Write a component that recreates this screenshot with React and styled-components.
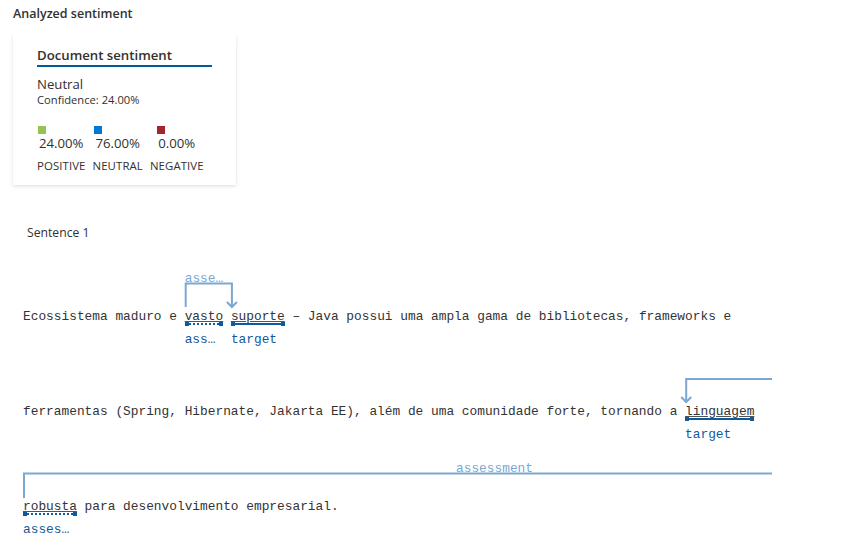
import React from 'react'
import styled, { createGlobalStyle, css } from 'styled-components'

const CW = 7.7 // monospace advance, px
const LIGHT = '#7ba7d1'
const DARK = '#0f5a9e'

const GlobalStyle = createGlobalStyle`
  * { box-sizing: border-box; }
  body {
    margin: 0;
    background: #fff;
    color: #323130;
    font-family: "Open Sans", "Noto Sans", sans-serif;
  }
`

// Page
const Page = styled.main`
  padding: 5px 13px 0;
`
const Heading = styled.h2`
  margin: 0;
  font-size: 12.5px;
  line-height: 18px;
  font-weight: 600;
`

// Document card
const Card = styled.section`
  width: 223px;
  margin-top: 11px;
  padding: 11px 24px 12px;
  background: #fff;
  box-shadow: 0 1.6px 3.6px rgba(0, 0, 0, 0.13), 0 0.3px 0.9px rgba(0, 0, 0, 0.11);
`
const CardTitle = styled.h3`
  margin: 0;
  font-size: 13.2px;
  line-height: 20px;
  font-weight: 600;
  border-bottom: 2px solid #005a9e;
`
const Overall = styled.div`
  margin-top: 8px;
  font-size: 13.2px;
  line-height: 18px;
`
const Confidence = styled.div`
  font-size: 11.2px;
  line-height: 14px;
`
const Scores = styled.div`
  display: flex;
  gap: 7px;
  margin-top: 19px;
`
const Score = styled.div`
  display: flex;
  flex-direction: column;
  align-items: center;
`
const ScoreValue = styled.div`
  display: flex;
  flex-direction: column;
  align-items: flex-start;
`
const Swatch = styled.span`
  width: 8px;
  height: 8px;
  margin-left: -1px;
  background: ${(p) => p.$color};
`
const Percent = styled.span`
  font-size: 13.2px;
  line-height: 18px;
`
const ScoreLabel = styled.span`
  margin-top: 7px;
  font-size: 11.4px;
  line-height: 14px;
  letter-spacing: 0.1px;
`

// Sentence visualisation
const SentenceTitle = styled.div`
  margin-top: 39px;
  padding-left: 14px;
  font-size: 12.2px;
  line-height: 18px;
`
const Viz = styled.div`
  margin-top: 27px;
  padding-left: 10px;
`
const Line = styled.div`
  position: relative;
  height: 95px;
  width: 749px;
  padding-top: 40px;
  font-family: "Liberation Mono", monospace;
  font-size: 12.833px;
  line-height: 16px;
  color: #333;
  white-space: pre;
`
const Arcs = styled.svg`
  position: absolute;
  top: 0;
  left: 0;
  overflow: visible;
  pointer-events: none;
`
const ArcLabel = styled.span`
  position: absolute;
  top: 2px;
  color: ${LIGHT};
  line-height: 16px;
`
const Token = styled.span`
  position: relative;
  text-decoration: underline;
  text-decoration-color: #555;
`
const capStyle = css`
  content: '';
  position: absolute;
  top: -1px;
  width: 4px;
  height: 4px;
  background: ${DARK};
`
const Bar = styled.span`
  position: absolute;
  left: 0;
  right: 0;
  top: calc(100% - 1px);
  height: 2px;
  background: ${(p) =>
    p.$dotted
      ? `repeating-linear-gradient(to right, ${DARK} 0 2px, transparent 2px 4px)`
      : DARK};
  &::before { ${capStyle} left: 0; }
  &::after { ${capStyle} right: 0; }
`
const TokenLabel = styled.span`
  position: absolute;
  left: 0;
  top: 23px;
  color: ${DARK};
  text-decoration: none;
  display: inline-block;
`

const Arrow = ({ x, y }) => <polyline points={`${x - 5},${y - 5} ${x},${y} ${x + 5},${y - 5}`} />

const AnnotatedToken = ({ text, label, dotted }) => (
  <Token>
    {text}
    <Bar $dotted={dotted} />
    <TokenLabel>{label}</TokenLabel>
  </Token>
)

const scores = [
  { color: '#92c353', value: '24.00%', label: 'POSITIVE' },
  { color: '#0078d4', value: '76.00%', label: 'NEUTRAL' },
  { color: '#a4262c', value: '0.00%', label: 'NEGATIVE' },
]

const x = (i) => i * CW

export default function App() {
  return (
    <Page>
      <GlobalStyle />
      <Heading>Analyzed sentiment</Heading>
      <Card>
        <CardTitle>Document sentiment</CardTitle>
        <Overall>Neutral</Overall>
        <Confidence>Confidence: 24.00%</Confidence>
        <Scores>
          {scores.map((s) => (
            <Score key={s.label}>
              <ScoreValue>
                <Swatch $color={s.color} />
                <Percent>{s.value}</Percent>
              </ScoreValue>
              <ScoreLabel>{s.label}</ScoreLabel>
            </Score>
          ))}
        </Scores>
      </Card>

      <SentenceTitle>Sentence 1</SentenceTitle>
      <Viz>
        <Line>
          <Arcs width="749" height="40" fill="none" stroke={LIGHT} strokeWidth="2">
            <path d={`M${x(21) + 1} 38 V14.5 H${x(27) + 1} V38`} />
            <Arrow x={x(27) + 1} y={38} />
          </Arcs>
          <ArcLabel style={{ left: x(21) }}>asse…</ArcLabel>
          {'Ecossistema maduro e '}
          <AnnotatedToken text="vasto" label="ass…" dotted />
          {' '}
          <AnnotatedToken text="suporte" label="target" />
          {' – Java possui uma ampla gama de bibliotecas, frameworks e'}
        </Line>
        <Line>
          <Arcs width="749" height="40" fill="none" stroke={LIGHT} strokeWidth="2">
            <path d={`M749 15 H${x(86) + 1} V38`} />
            <Arrow x={x(86) + 1} y={38} />
          </Arcs>
          {'ferramentas (Spring, Hibernate, Jakarta EE), além de uma comunidade forte, tornando a '}
          <AnnotatedToken text="linguagem" label="target" />
        </Line>
        <Line>
          <Arcs width="749" height="40" fill="none" stroke={LIGHT} strokeWidth="2">
            <path d="M1 39 V14.5 H749" />
          </Arcs>
          <ArcLabel style={{ left: 433 }}>assessment</ArcLabel>
          <AnnotatedToken text="robusta" label="asses…" dotted />
          {' para desenvolvimento empresarial.'}
        </Line>
      </Viz>
    </Page>
  )
}
